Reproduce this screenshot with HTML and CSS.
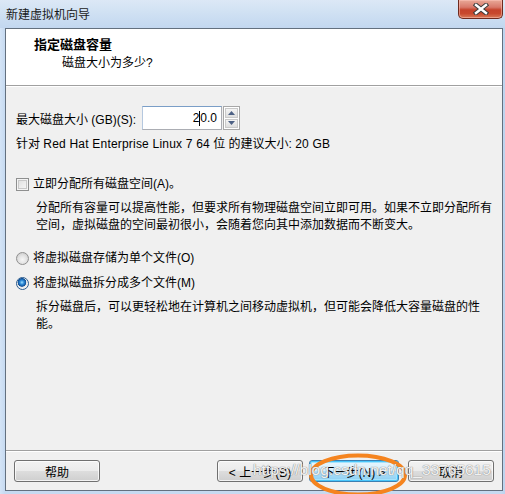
FILE: index.html
```html
<!DOCTYPE html>
<html>
<head>
<meta charset="utf-8">
<link rel="stylesheet" href="styles.css">
</head>
<body>
<div class="window">
  <div class="titlebar">
    <span class="title">新建虚拟机向导</span>
    <div class="close">
      <svg width="16" height="12" viewBox="0 0 16 12">
        <path d="M3 2 L13 10 M13 2 L3 10" stroke="#3b3b3b" stroke-width="4.4" stroke-linecap="square" fill="none"/>
        <path d="M3 2 L13 10 M13 2 L3 10" stroke="#ffffff" stroke-width="2.4" stroke-linecap="square" fill="none"/>
      </svg>
    </div>
  </div>
  <div class="client">
    <div class="header">
      <div class="h-title">指定磁盘容量</div>
      <div class="h-sub">磁盘大小为多少?</div>
    </div>
    <div class="body">
      <div class="size-row">
        <span class="label">最大磁盘大小 (GB)(S):</span>
        <div class="spin">
          <div class="spin-input"><span>2</span><span class="caret"></span><span>0.0</span></div>
          <div class="spin-btns">
            <div class="spin-btn"><svg width="7" height="4" viewBox="0 0 7 4"><path d="M0 4 L3.5 0 L7 4 Z" fill="#4d6185"/></svg></div>
            <div class="spin-btn"><svg width="7" height="4" viewBox="0 0 7 4"><path d="M0 0 L3.5 4 L7 0 Z" fill="#4d6185"/></svg></div>
          </div>
        </div>
      </div>
      <div class="line recommend">针对 <span class="lat">Red Hat Enterprise Linux 7 64</span> 位 的建议大小: <span class="lat">20 GB</span></div>
      <div class="line option check-row"><span class="checkbox"></span>立即分配所有磁盘空间(A)。</div>
      <div class="desc">分配所有容量可以提高性能，但要求所有物理磁盘空间立即可用。如果不立即分配所有<br>空间，虚拟磁盘的空间最初很小，会随着您向其中添加数据而不断变大。</div>
      <div class="line option radio-first"><span class="radio"></span>将虚拟磁盘存储为单个文件(O)</div>
      <div class="line option radio-second"><span class="radio checked"></span>将虚拟磁盘拆分成多个文件(M)</div>
      <div class="desc">拆分磁盘后，可以更轻松地在计算机之间移动虚拟机，但可能会降低大容量磁盘的性<br>能。</div>
    </div>
    <div class="footer">
      <button class="btn">帮助</button>
      <div class="spacer"></div>
      <button class="btn btn-back">&lt; 上一步(B)</button>
      <button class="btn btn-default">下一步(N) &gt;</button>
      <button class="btn btn-cancel">取消</button>
    </div>
  </div>
  <svg class="annot" width="104" height="48" viewBox="0 0 104 48">
    <ellipse cx="52" cy="24" rx="47" ry="19.5" fill="none" stroke="#f5841f" stroke-width="4"/>
  </svg>
  <div class="watermark">https://blog.csdn.net/qq_33765615</div>
</div>
</body>
</html>
```

FILE: styles.css
```css
* { box-sizing: border-box; }
html, body { margin: 0; padding: 0; }
body {
  width: 505px;
  height: 494px;
  overflow: hidden;
  font-family: "Liberation Sans", "Noto Sans CJK SC", sans-serif;
  font-size: 12px;
  color: #000;
}
.window {
  position: relative;
  width: 505px;
  height: 494px;
  background: linear-gradient(90deg, #d4e4f6 0px, #c6daf1 5px, #c6daf1 500px, #bcd3ee 505px);
  display: flex;
  flex-direction: column;
}
.titlebar {
  height: 28px;
  display: flex;
  align-items: flex-start;
  background: linear-gradient(180deg, #dce8f6 0%, #d0e1f3 45%, #c2d7f0 100%);
}
.title {
  padding: 7px 0 0 6px;
  line-height: 16px;
  font-size: 12px;
  color: #1a1a1a;
}
.close {
  margin-left: auto;
  margin-right: 2px;
  width: 45px;
  height: 19px;
  border: 1px solid #6e2a1e;
  border-top: none;
  border-radius: 0 0 5px 5px;
  background: linear-gradient(180deg, #e9a998 0%, #d8796a 40%, #c5432b 55%, #c8482d 75%, #d87a58 100%);
  box-shadow: inset 0 0 0 1px rgba(255, 200, 190, 0.5);
  display: flex;
  align-items: center;
  justify-content: center;
}
.client {
  flex: 1;
  margin: 0 2px 3px 5px;
  border: 1px solid #63707f;
  background: #f0f0f0;
  display: flex;
  flex-direction: column;
}
.header {
  height: 57px;
  background: #fff;
  border-bottom: 1px solid #a0a0a0;
  padding: 7px 0 0 28px;
}
.h-title {
  font-weight: bold;
  font-size: 13px;
  line-height: 18px;
}
.h-sub {
  padding-left: 28px;
  line-height: 18px;
}
.body {
  flex: 1;
  border-top: 1px solid #fff;
  padding: 19px 0 0 10px;
}
.size-row {
  display: flex;
  align-items: center;
  height: 24px;
}
.label { margin-right: 6px; }
.spin {
  display: flex;
  height: 24px;
}
.spin-input {
  width: 80px;
  height: 24px;
  border: 1px solid #abadb3;
  border-top-color: #7a9ec7;
  border-left-color: #b5c8df;
  background: #fff;
  display: flex;
  align-items: center;
  justify-content: flex-end;
  padding-right: 4px;
  font-size: 12px;
}
.caret {
  display: inline-block;
  width: 1px;
  height: 15px;
  background: #000;
}
.spin-btns {
  display: flex;
  flex-direction: column;
  width: 17px;
  margin-left: 1px;
  border: 1px solid #a7a7a7;
  background: #fff;
  padding: 1px;
}
.spin-btn {
  flex: 1;
  display: flex;
  align-items: center;
  justify-content: center;
  background: linear-gradient(180deg, #f4f4f4, #dedede);
  border: 1px solid #c9c9c9;
}
.spin-btn + .spin-btn { margin-top: 1px; }
.line {
  line-height: 17px;
  height: 17px;
  white-space: nowrap;
}
.lat { letter-spacing: 0.2px; }
.recommend { margin-top: 6px; }
.option {
  display: flex;
  align-items: center;
}
.check-row { margin-top: 23px; }
.checkbox {
  width: 13px;
  height: 13px;
  border: 1px solid #8e8f8f;
  background: linear-gradient(135deg, #dcdcdc, #fafafa);
  box-shadow: inset 0 0 0 1px #f4f4f4, inset 0 0 0 2px #c8c8c8;
  margin-right: 4px;
}
.radio {
  width: 13px;
  height: 13px;
  border-radius: 50%;
  border: 1px solid #8f8f8f;
  background: radial-gradient(circle at 50% 60%, #f6f6f6 0, #e3e3e3 4px, #d5d5d5 6px);
  margin-right: 4px;
}
.radio.checked {
  background: radial-gradient(circle at 45% 40%, #9fe0ff 0, #2f8bd8 2px, #0e4f97 4px, #e6e6e6 4.6px, #f2f2f2 6px);
  border-color: #2b5b8d;
}
.desc {
  margin-left: 20px;
  line-height: 17px;
  margin-top: 7px;
  white-space: nowrap;
}
.radio-first { margin-top: 16px; }
.radio-second { margin-top: 8px; }
.footer {
  height: 40px;
  border-top: 1px solid #a0a0a0;
  box-shadow: inset 0 1px 0 #fff;
  display: flex;
  align-items: flex-start;
  padding: 9px 8px 0 8px;
}
.spacer { flex: 1; }
.btn {
  font-family: "Liberation Sans", "Noto Sans CJK SC", sans-serif;
  font-size: 12px;
  color: #000;
  width: 86px;
  height: 22px;
  padding: 0;
  border: 1px solid #707070;
  border-radius: 3px;
  background: linear-gradient(180deg, #f2f2f2 0%, #ebebeb 50%, #dddddd 51%, #cfcfcf 100%);
  box-shadow: inset 0 0 0 1px rgba(255, 255, 255, 0.75);
}
.btn-back { margin-right: 1px; }
.btn-default {
  width: 90px;
  margin-left: 5px;
  border-color: #3c7fb1;
  background: linear-gradient(180deg, #e8f6fd 0%, #d6effc 50%, #b3e2fa 51%, #8ccff3 100%);
  box-shadow: inset 0 0 0 1px #48c6fb, inset 0 0 0 2px #a5e3fd;
}
.btn-cancel { margin-left: 9px; }
.annot {
  position: absolute;
  left: 306px;
  top: 451px;
}
.watermark {
  position: absolute;
  left: 253px;
  top: 461px;
  font-family: "Liberation Sans", sans-serif;
  font-size: 15.5px;
  color: rgba(255, 255, 255, 0.9);
  text-shadow: 0 0 1px #8a8a8a, 0 0 1px #8a8a8a;
  white-space: nowrap;
  pointer-events: none;
}
```
